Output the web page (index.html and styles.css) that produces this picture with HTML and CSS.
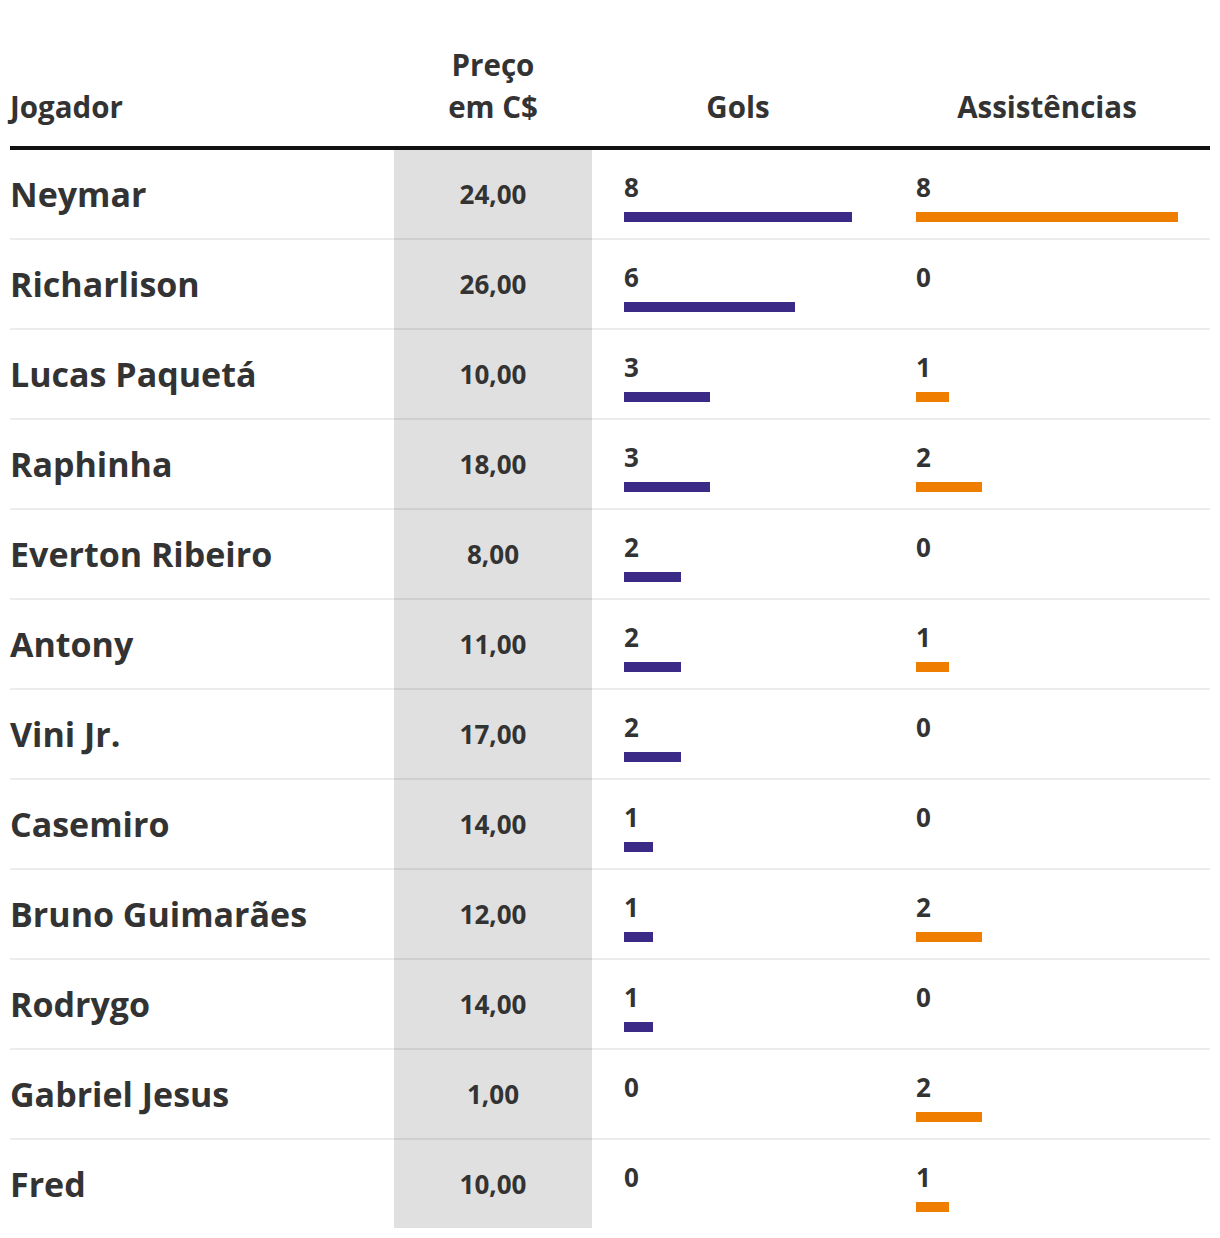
FILE: index.html
```html
<!DOCTYPE html>
<html lang="pt">
<head>
<meta charset="utf-8">
<link rel="stylesheet" href="styles.css">
</head>
<body>
<div class="wrap">
<table class="stats">
  <thead>
    <tr>
      <th class="col-name">Jogador</th>
      <th class="col-price">Preço<br>em C$</th>
      <th class="col-gols">Gols</th>
      <th class="col-ast">Assistências</th>
    </tr>
  </thead>
  <tbody>
    <tr><td class="name">Neymar</td><td class="price">24,00</td><td class="num"><div class="val">8</div><div class="bar gols" style="width:100%"></div></td><td class="num"><div class="val">8</div><div class="bar ast" style="width:100%"></div></td></tr>
    <tr><td class="name">Richarlison</td><td class="price">26,00</td><td class="num"><div class="val">6</div><div class="bar gols" style="width:75%"></div></td><td class="num"><div class="val">0</div></td></tr>
    <tr><td class="name">Lucas Paquetá</td><td class="price">10,00</td><td class="num"><div class="val">3</div><div class="bar gols" style="width:37.5%"></div></td><td class="num"><div class="val">1</div><div class="bar ast" style="width:12.5%"></div></td></tr>
    <tr><td class="name">Raphinha</td><td class="price">18,00</td><td class="num"><div class="val">3</div><div class="bar gols" style="width:37.5%"></div></td><td class="num"><div class="val">2</div><div class="bar ast" style="width:25%"></div></td></tr>
    <tr><td class="name">Everton Ribeiro</td><td class="price">8,00</td><td class="num"><div class="val">2</div><div class="bar gols" style="width:25%"></div></td><td class="num"><div class="val">0</div></td></tr>
    <tr><td class="name">Antony</td><td class="price">11,00</td><td class="num"><div class="val">2</div><div class="bar gols" style="width:25%"></div></td><td class="num"><div class="val">1</div><div class="bar ast" style="width:12.5%"></div></td></tr>
    <tr><td class="name">Vini Jr.</td><td class="price">17,00</td><td class="num"><div class="val">2</div><div class="bar gols" style="width:25%"></div></td><td class="num"><div class="val">0</div></td></tr>
    <tr><td class="name">Casemiro</td><td class="price">14,00</td><td class="num"><div class="val">1</div><div class="bar gols" style="width:12.5%"></div></td><td class="num"><div class="val">0</div></td></tr>
    <tr><td class="name">Bruno Guimarães</td><td class="price">12,00</td><td class="num"><div class="val">1</div><div class="bar gols" style="width:12.5%"></div></td><td class="num"><div class="val">2</div><div class="bar ast" style="width:25%"></div></td></tr>
    <tr><td class="name">Rodrygo</td><td class="price">14,00</td><td class="num"><div class="val">1</div><div class="bar gols" style="width:12.5%"></div></td><td class="num"><div class="val">0</div></td></tr>
    <tr><td class="name">Gabriel Jesus</td><td class="price">1,00</td><td class="num"><div class="val">0</div></td><td class="num"><div class="val">2</div><div class="bar ast" style="width:25%"></div></td></tr>
    <tr><td class="name">Fred</td><td class="price">10,00</td><td class="num"><div class="val">0</div></td><td class="num"><div class="val">1</div><div class="bar ast" style="width:12.5%"></div></td></tr>
  </tbody>
</table>
</div>
</body>
</html>
```

FILE: styles.css
```css
html, body {
  margin: 0;
  padding: 0;
  background: #fff;
}
.wrap {
  padding: 0 10px;
}
.stats {
  width: 1200px;
  border-collapse: collapse;
  table-layout: fixed;
  font-family: "Open Sans", "Noto Sans", sans-serif;
  color: #333;
}
.stats th {
  font-size: 29.5px;
  line-height: 42px;
  font-weight: 700;
  vertical-align: bottom;
  padding: 44px 0 18px;
  border-bottom: 4px solid #111;
  text-align: center;
}
.stats th.col-name {
  text-align: left;
  width: 384px;
}
.col-price { width: 198px; }
.col-gols { width: 292px; }
.col-ast { width: 326px; }

.stats td {
  height: 88px;
  padding: 0;
  border-bottom: 2px solid rgba(0, 0, 0, 0.075);
}
.stats tbody tr:last-child td {
  border-bottom: none;
}
.stats td.name {
  font-size: 34px;
  line-height: 50px;
  font-weight: 700;
  vertical-align: middle;
  white-space: nowrap;
}
.stats td.price {
  background: #e0e0e0;
  text-align: center;
  font-size: 26px;
  line-height: 39px;
  font-weight: 700;
  vertical-align: middle;
}
.stats td.num {
  height: 70px;
  vertical-align: top;
  padding: 18px 32px 0;
}
.val {
  font-size: 26px;
  line-height: 39px;
  font-weight: 700;
}
.bar {
  height: 10px;
  margin-top: 5px;
}
.bar.gols { background: #3c2a87; }
.bar.ast { background: #ee7d00; }
```
